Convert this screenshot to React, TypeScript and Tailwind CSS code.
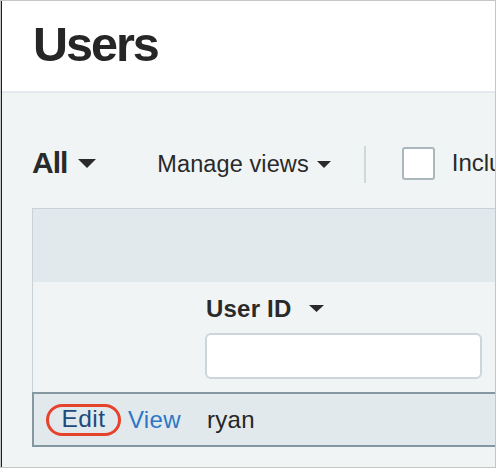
import React from "react";

const Caret = ({ w, h }: { w: number; h: number }) => (
  <svg width={w} height={h} viewBox="0 0 10 5" className="shrink-0" preserveAspectRatio="none">
    <path d="M0 0 L10 0 L5 5 Z" fill="#2a2a2a" />
  </svg>
);

export default function App() {
  return (
    <div
      className="w-[496px] h-[468px] overflow-hidden bg-white border-t border-r border-b border-l border-[#c6c6c6]"
      style={{ fontFamily: '"Liberation Sans", Arial, Helvetica, sans-serif' }}
    >
      <div className="h-full flex flex-col border-l border-[#1e1e1e]">
        {/* Header */}
        <div className="h-[90px] shrink-0 bg-white pl-[31px] pt-[19px]">
          <h1 className="text-[48.5px] leading-none font-bold tracking-[-2px] text-[#262626]">Users</h1>
        </div>
        <div className="h-[2px] shrink-0 bg-[#e3e9ec]" />
        {/* Main */}
        <div className="flex-1 bg-[#f1f4f5] pl-[30px] pt-[50px] overflow-hidden">
          {/* Toolbar */}
          <div className="h-[40px] w-[640px] flex items-center text-[#2a2a2a] whitespace-nowrap">
            <span className="shrink-0 text-[30px] leading-none font-bold tracking-[-1px]">All</span>
            <span className="shrink-0 ml-[11px]"><Caret w={18} h={9} /></span>
            <span className="shrink-0 ml-[61px] mt-[3px] text-[23.5px] leading-none tracking-[0.1px]">Manage views</span>
            <span className="shrink-0 ml-[8px] mt-[3px]"><Caret w={14} h={7} /></span>
            <div className="shrink-0 ml-[33px] mt-[2px] w-[2px] h-[37px] bg-[#cfd7db]" />
            <div className="shrink-0 ml-[36px] w-[33px] h-[33px] bg-white border-2 border-[#aab8bc] rounded-[3px]" />
            <span className="shrink-0 ml-[17px] text-[24px] leading-none">Include inactive</span>
          </div>
          {/* Table */}
          <div className="mt-[25px] w-[640px]">
            <div className="border-t border-l border-[#c9d2d6]">
              <div className="h-[73px] bg-[#e2e9ec]" />
              <div className="flex h-[110px] bg-[#f1f4f5]">
                <div className="w-[172px] shrink-0" />
                <div className="flex flex-col pt-[15px]">
                  <div className="flex items-center h-[23px] pl-[1px]">
                    <span className="text-[24px] leading-none font-bold text-[#2a2a2a] tracking-[0.2px]">User ID</span>
                    <span className="ml-[18px]"><Caret w={15} h={7} /></span>
                  </div>
                  <div className="mt-[13px] w-[277px] h-[46px] bg-white border-2 border-[#ccd5d9] rounded-[6px]" />
                </div>
              </div>
            </div>
            <div className="flex items-center h-[55px] bg-[#e2e9ec] border-t-2 border-b-2 border-l-2 border-[#8597a1]">
              <div className="w-[171px] shrink-0 flex items-center pl-[12px]">
                <span className="w-[75px] h-[32px] flex items-center justify-center border-[3.5px] border-[#e5432b] rounded-full text-[24.5px] leading-none text-[#1d4b7c] tracking-[0.4px]">
                  Edit
                </span>
                <span className="ml-[7px] text-[24px] leading-none text-[#2b77c6] tracking-[0.3px]">View</span>
              </div>
              <span className="pl-[2px] text-[24px] leading-none text-[#262626] tracking-[0.3px]">ryan</span>
            </div>
          </div>
        </div>
      </div>
    </div>
  );
}
